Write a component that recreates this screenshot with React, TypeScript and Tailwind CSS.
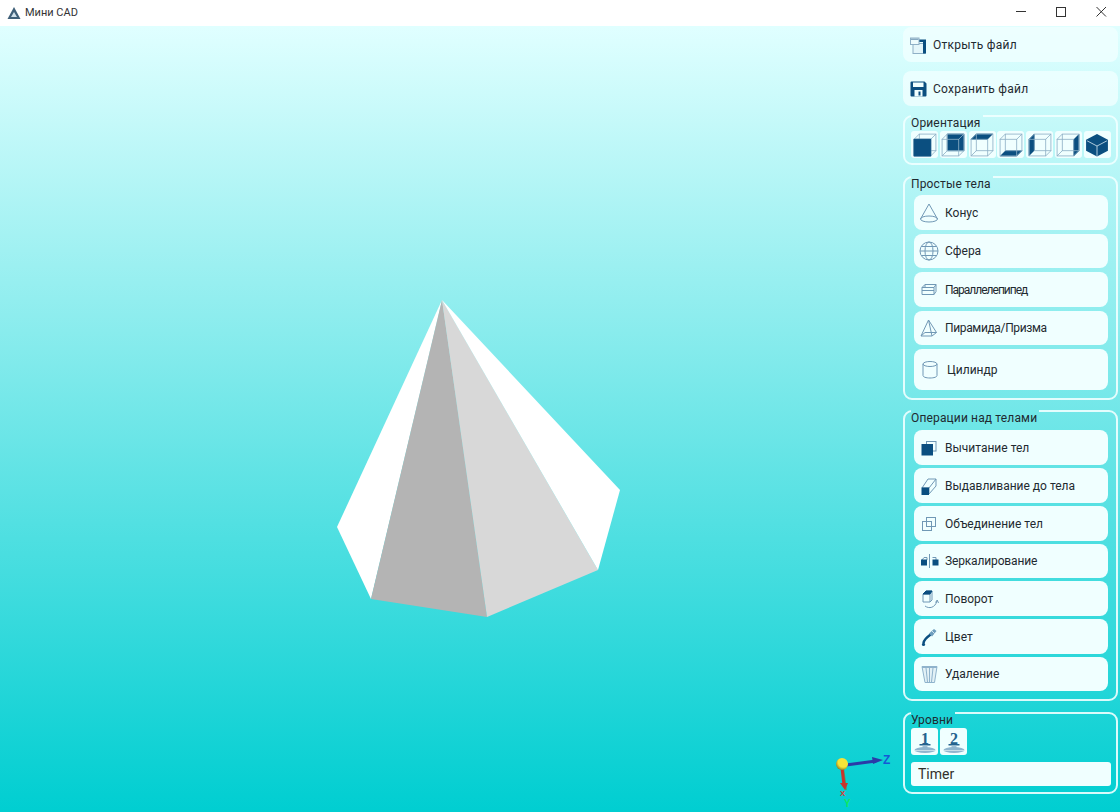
import React from 'react';

const DARK = '#0b4f80';
const LINE = '#8fb0c6';

type Face = 'front' | 'back' | 'top' | 'bottom' | 'left' | 'right';

const FACES: Record<Face, string> = {
  front: '2,7 18,7 18,23 2,23',
  back: '7,2 23,2 23,18 7,18',
  top: '2,7 7,2 23,2 18,7',
  bottom: '2,23 7,18 23,18 18,23',
  left: '2,7 7,2 7,18 2,23',
  right: '18,7 23,2 23,18 18,23',
};

const Cube = ({ face }: { face: Face }) => (
  <svg width="26" height="26" viewBox="0 0 25 25" fill="none" stroke={LINE} strokeWidth="0.8">
    <polygon points={FACES[face]} fill={DARK} stroke={DARK} />
    <rect x="7" y="2" width="16" height="16" />
    <path d="M2 7 7 2M18 7 23 2M18 23 23 18M2 23 7 18" />
    <rect x="2" y="7" width="16" height="16" />
    {face === 'front' && <rect x="2" y="7" width="16" height="16" fill={DARK} stroke={DARK} />}
  </svg>
);

const IsoCube = () => (
  <svg width="26" height="26" viewBox="0 0 25 25">
    <polygon points="12.5,2 23,7.5 23,18 12.5,23.5 2,18 2,7.5" fill={DARK} />
    <path d="M3 8.5 12.5 13.5 22 8.5M12.5 13.5V23" fill="none" stroke="#cfe3ee" strokeWidth="0.8" />
  </svg>
);

const OpenIcon = () => (
  <svg width="20" height="24" viewBox="0 0 20 24" fill="none">
    <rect x="3" y="10.500" width="12" height="10" stroke={LINE} fill="#e4f6fa" />
    <polygon points="8,6.500 16,6.500 16,20.500 13,20.500 13,9 8,9" fill={DARK} />
    <rect x="0.500" y="5" width="8.500" height="6.500" stroke={LINE} fill="#eefcfd" />
    <rect x="1" y="5.500" width="7.500" height="1.500" fill="#86a9c1" />
  </svg>
);

const SaveIcon = () => (
  <svg width="20" height="24" viewBox="0 0 20 24">
    <path d="M0.500 5.500A1 1 0 0 1 1.500 4.500H14.500L16.500 6.500V18.500A1 1 0 0 1 15.500 19.500H1.500A1 1 0 0 1 0.500 18.500Z" fill={DARK} />
    <rect x="3" y="5.500" width="10.500" height="4.500" fill="#f0ffff" />
    <rect x="4.500" y="13" width="8" height="6.500" fill="#f0ffff" />
    <rect x="8.500" y="14.500" width="2" height="4" fill={DARK} />
  </svg>
);

const Thin = ({ children }: { children: React.ReactNode }) => (
  <svg width="24" height="24" viewBox="0 0 24 24" fill="none" stroke="#7098b5" strokeWidth="1">
    {children}
  </svg>
);

const ConeIcon = () => (
  <Thin>
    <path d="M11 3 2.500 18M11 3 19.500 18" />
    <ellipse cx="11" cy="18" rx="8.500" ry="3" />
  </Thin>
);

const SphereIcon = () => (
  <Thin>
    <circle cx="11" cy="12" r="9" />
    <ellipse cx="11" cy="12" rx="4" ry="9" />
    <path d="M2 12H20M3.500 7.500H18.500M3.500 16.500H18.500" />
  </Thin>
);

const BoxIcon = () => (
  <Thin>
    <path d="M4 9.500 7 6.500H18L16 9.500V16.500H4ZM4 9.500H16M16 16.500 18 13.500V6.500M4 12.500H16M7 6.500V9.500" />
  </Thin>
);

const PyramidIcon = () => (
  <Thin>
    <path d="M10.500 4 3 20H14L18.500 16.500ZM10.500 4 14 20M3 20 7 16.500H18.500" />
  </Thin>
);

const CylinderIcon = () => (
  <Thin>
    <ellipse cx="12" cy="6" rx="7" ry="2.500" />
    <path d="M5 6V17.500C5 19 8 20 12 20S19 19 19 17.500V6" />
  </Thin>
);

const SubtractIcon = () => (
  <Thin>
    <rect x="8.500" y="5.500" width="9.500" height="9.500" />
    <rect x="4" y="8.500" width="10.500" height="10.500" fill={DARK} stroke={DARK} />
  </Thin>
);

const ExtrudeIcon = () => (
  <Thin>
    <path d="M4 14 10 5H18V12L11 20" />
    <path d="M11 14V20M11 14H4M11 14 18 5" />
    <rect x="4" y="14" width="6.500" height="6.500" fill={DARK} stroke={DARK} />
  </Thin>
);

const UnionIcon = () => (
  <Thin>
    <rect x="8.500" y="5.500" width="9" height="9" />
    <rect x="4.500" y="9.500" width="9" height="9" />
  </Thin>
);

const MirrorIcon = () => (
  <Thin>
    <path d="M11.500 5V19" />
    <path d="M4 11 6 8.500H9V11" />
    <rect x="3.500" y="11" width="5" height="5" fill={DARK} stroke={DARK} />
    <path d="M14.500 8.500H18V11" />
    <rect x="15" y="11" width="5" height="5" fill={DARK} stroke={DARK} />
  </Thin>
);

const RotateIcon = () => (
  <Thin>
    <path d="M5 7 8 4H14V13L12 15H5Z" />
    <path d="M5 7H12V15" />
    <polygon points="5,7 8,4 14,4 12,7" fill={DARK} stroke={DARK} />
    <path d="M7 19C11 22 17 21 19 14" />
    <path d="M17.500 15.500 19.200 13 20.500 16" />
  </Thin>
);

const ColorIcon = () => (
  <svg width="24" height="24" viewBox="0 0 24 24" fill="none">
    <path d="M5.500 18C6 15 8.500 12.500 12 10" stroke={DARK} strokeWidth="2.400" strokeLinecap="round" />
    <circle cx="5.500" cy="19.500" r="1.600" fill={DARK} />
    <path d="M11 8.500 16 4 18.500 6 14 11.500Z" fill="#6d9dbd" />
    <path d="M14 6 17 9" stroke="#cfe3ee" strokeWidth="1" />
  </svg>
);

const TrashIcon = () => (
  <svg width="24" height="24" viewBox="0 0 24 24" fill="none" stroke="#8fb3cc" strokeWidth="1">
    <path d="M4 4.500H19L16.500 20.500H7Z" fill="#e2f1f6" />
    <path d="M4 5.500H19M8 6 9.500 20M11.500 6V20M15 6 13.500 20" />
  </svg>
);

const StampIcon = ({ digit }: { digit: string }) => (
  <svg width="26" height="26" viewBox="0 0 26 26">
    <text x="13" y="14.500" textAnchor="middle" fontSize="16" fontWeight="700" fill="#24638f" fontFamily="'Liberation Serif', serif">
      {digit}
    </text>
    <rect x="7.500" y="15" width="11" height="1.500" fill="#24638f" />
    <rect x="10.500" y="16.500" width="5" height="2.500" fill="#9fbfd4" />
    <ellipse cx="13" cy="21" rx="10.500" ry="3" fill="#8fb5ce" />
    <path d="M3 21.500H23" stroke="#d7e8f0" strokeWidth="0.800" />
  </svg>
);

const Axes = () => (
  <>
    <defs>
      <radialGradient id="ball" cx="0.6" cy="0.35" r="0.75">
        <stop offset="0.55" stopColor="#f6e437" />
        <stop offset="1" stopColor="#6f6420" />
      </radialGradient>
    </defs>
    <line x1="846" y1="765" x2="876" y2="761" stroke="#2b3aa8" strokeWidth="3" />
    <polygon points="872,757 883,760 873,764" fill="#2b3aa8" />
    <text x="883" y="764" fontSize="12" fontWeight="700" fill="#1558d6" fontFamily="'Liberation Sans', sans-serif">
      Z
    </text>
    <line x1="843" y1="768" x2="846" y2="790" stroke="#46a06a" strokeWidth="2" />
    <line x1="842" y1="768" x2="844" y2="785" stroke="#c8352c" strokeWidth="3" />
    <polygon points="840,783 848,783 845,790" fill="#c8352c" />
    <text x="840" y="796" fontSize="8" fontWeight="700" fill="#d83a30" fontFamily="'Liberation Sans', sans-serif">
      X
    </text>
    <text x="844" y="807" fontSize="10" fontWeight="700" fill="#10e860" fontFamily="'Liberation Sans', sans-serif">
      Y
    </text>
    <circle cx="842" cy="764" r="6" fill="url(#ball)" />
  </>
);

const Viewport = () => (
  <svg className="h-full flex-1" viewBox="0 26 903 786">
    <polygon points="442,300 337,527 371,599" fill="#ffffff" />
    <polygon points="442,300 371,599 487,617" fill="#b4b4b4" />
    <polygon points="442,300 487,617 598,570" fill="#d8d8d8" />
    <polygon points="442,300 598,570 620,490" fill="#ffffff" />
    <Axes />
  </svg>
);

const Group = ({ title, className, children }: { title: string; className: string; children: React.ReactNode }) => (
  <fieldset className={`w-[215px] rounded-[9px] border-2 border-[#f0ffff]/90 pl-[6px] ${className}`}>
    <legend className="h-[2px] pr-[2px] text-[12px] leading-[16px] tracking-[0.15px] text-[#1f2a30]">{title}</legend>
    {children}
  </fieldset>
);

interface Item {
  label: string;
  icon: React.ReactNode;
  className: string;
}

const BODIES: Item[] = [
  { label: 'Конус', icon: <ConeIcon />, className: 'h-[35px]' },
  { label: 'Сфера', icon: <SphereIcon />, className: 'h-[34px]' },
  { label: 'Параллелепипед', icon: <BoxIcon />, className: 'h-[35px] tracking-[-1px]' },
  { label: 'Пирамида/Призма', icon: <PyramidIcon />, className: 'h-[34px] tracking-[-0.35px]' },
];

const OPERATIONS: Item[] = [
  { label: 'Вычитание тел', icon: <SubtractIcon />, className: 'h-[35px]' },
  { label: 'Выдавливание до тела', icon: <ExtrudeIcon />, className: 'h-[35px]' },
  { label: 'Объединение тел', icon: <UnionIcon />, className: 'h-[35px]' },
  { label: 'Зеркалирование', icon: <MirrorIcon />, className: 'h-[34px] tracking-[-0.15px]' },
  { label: 'Поворот', icon: <RotateIcon />, className: 'h-[35px]' },
  { label: 'Цвет', icon: <ColorIcon />, className: 'h-[35px]' },
  { label: 'Удаление', icon: <TrashIcon />, className: 'h-[34px]' },
];

const ListButton = ({ item }: { item: Item }) => (
  <button className={`flex w-[194px] items-center gap-[3px] rounded-lg bg-[#f0ffff] pl-[4px] text-[12px] text-[#1f2a30] ${item.className}`}>
    {item.icon}
    {item.label}
  </button>
);

const FileButton = ({ label, icon, className }: { label: string; icon: React.ReactNode; className: string }) => (
  <button className={`flex h-[35px] w-[215px] items-center gap-[3px] rounded-lg bg-[#f0ffff]/80 pl-[7px] text-[12px] tracking-[0.25px] text-[#1f2a30] ${className}`}>
    {icon}
    {label}
  </button>
);

const TileButton = ({ children }: { children: React.ReactNode }) => (
  <button className="flex h-[27px] w-[27px] items-center justify-center rounded-[3px] bg-[#f0ffff]">{children}</button>
);

const WindowControls = () => (
  <svg width="100" height="26" viewBox="0 0 100 26" fill="none" stroke="#333333" strokeWidth="1">
    <path d="M0 11.500H10" />
    <rect x="40.500" y="7.500" width="9" height="9" />
    <path d="M80.500 7 90 16.500M90 7 80.500 16.500" />
  </svg>
);

export default function App() {
  const faces: Face[] = ['front', 'back', 'top', 'bottom', 'left', 'right'];

  return (
    <div className="flex h-[812px] w-[1120px] flex-col overflow-hidden font-['Roboto',sans-serif]">
      <header className="flex h-[26px] shrink-0 items-center bg-white pl-[7px] pr-[4px]">
        <svg width="14" height="14" viewBox="0 0 14 14">
          <polygon points="7,1 13.500,13 0.500,13" fill="#3f5f78" />
          <polygon points="7,6 10,11 4,11" fill="#cfe0ea" />
        </svg>
        <span className="ml-[4px] flex-1 text-[11px] text-[#333333]">Мини CAD</span>
        <WindowControls />
      </header>

      <main className="flex h-[786px] bg-linear-to-b/srgb from-[#e0ffff] to-[#00ced1]">
        <Viewport />

        <aside className="flex w-[217px] shrink-0 flex-col pt-px">
          <FileButton label="Открыть файл" icon={<OpenIcon />} className="" />
          <FileButton label="Сохранить файл" icon={<SaveIcon />} className="mt-[9px]" />

          <Group title="Ориентация" className="mt-[9px] h-[50px] pt-[14px]">
            <div className="flex gap-[1.8px]">
              {faces.map((f) => (
                <TileButton key={f}>
                  <Cube face={f} />
                </TileButton>
              ))}
              <TileButton>
                <IsoCube />
              </TileButton>
            </div>
          </Group>

          <Group title="Простые тела" className="mt-[11px] h-[224px] pt-[17px]">
            <div className="flex flex-col gap-[4px] pl-[3px]">
              {BODIES.map((b) => (
                <ListButton key={b.label} item={b} />
              ))}
              <button className="flex h-[41px] w-[194px] items-center gap-[5px] rounded-lg bg-[#f0ffff] pl-[4px] text-[12px] text-[#1f2a30]">
                <CylinderIcon />
                Цилиндр
              </button>
            </div>
          </Group>

          <Group title="Операции над телами" className="mt-[10px] h-[291px] pt-[18px]">
            <div className="flex flex-col gap-[3px] pl-[3px]">
              {OPERATIONS.map((o) => (
                <ListButton key={o.label} item={o} />
              ))}
            </div>
          </Group>

          <Group title="Уровни" className="mt-[11px] h-[82px] pt-[14px]">
            <div className="flex gap-[2px]">
              <TileButton>
                <StampIcon digit="1" />
              </TileButton>
              <TileButton>
                <StampIcon digit="2" />
              </TileButton>
            </div>
            <input
              readOnly
              value="Timer"
              className="mt-[7px] h-[24px] w-[200px] rounded-[3px] bg-[#f0ffff] pl-[7px] text-[14px] text-[#33302a] outline-none"
            />
          </Group>
        </aside>
      </main>
    </div>
  );
}
